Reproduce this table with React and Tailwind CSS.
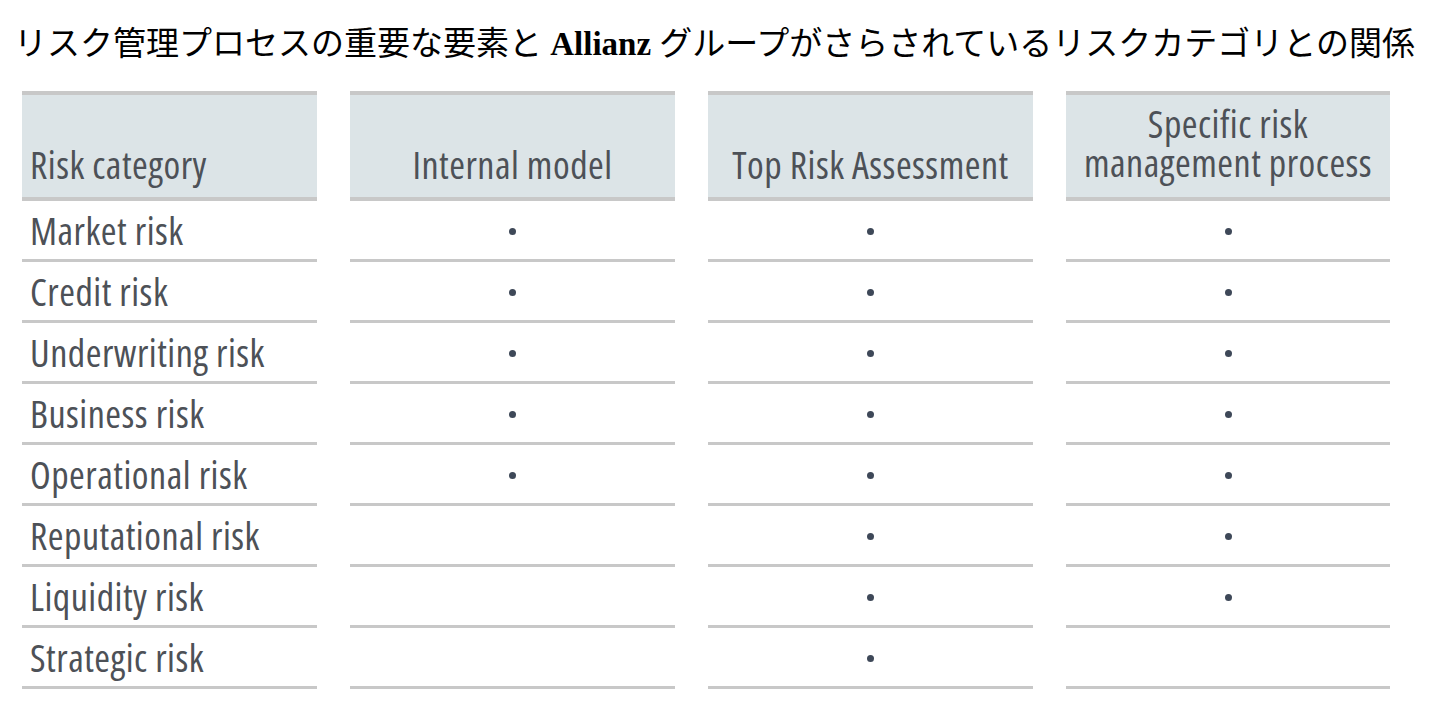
const rows = [
  ["Market risk", true, true, true],
  ["Credit risk", true, true, true],
  ["Underwriting risk", true, true, true],
  ["Business risk", true, true, true],
  ["Operational risk", true, true, true],
  ["Reputational risk", false, true, true],
  ["Liquidity risk", false, true, true],
  ["Strategic risk", false, true, false],
];

function Dot() {
  return <span className="block w-[7px] h-[7px] rounded-full bg-[#3e4858] mt-[2px]" />;
}

export default function App() {
  return (
    <div className="w-[1436px] h-[709px] bg-white overflow-hidden">
      <div className="h-[91px] flex items-center pl-[14px] pb-[3px]">
        <h1 className="text-[33px] leading-none text-black font-normal font-['Liberation_Serif','Noto_Sans_CJK_JP',serif] whitespace-nowrap">
          リスク管理プロセスの重要な要素と <span className="font-bold">Allianz</span> グループがさらされているリスクカテゴリとの関係
        </h1>
      </div>
      <div className="grid grid-cols-[295px_325px_325px_324px] gap-x-[33px] pl-[22px] text-[#4d5157] font-['Open_Sans',sans-serif] font-stretch-[75%] text-[38px] tracking-[0.5px]">
        <div className="h-[110px] bg-[#dce4e7] border-y-4 border-[#c8c8c8] flex items-end pl-[8px] pb-[15px] leading-[36px]">
          Risk category
        </div>
        <div className="h-[110px] bg-[#dce4e7] border-y-4 border-[#c8c8c8] flex items-end justify-center pb-[15px] leading-[36px]">
          Internal model
        </div>
        <div className="h-[110px] bg-[#dce4e7] border-y-4 border-[#c8c8c8] flex items-end justify-center pb-[15px] leading-[36px]">
          Top Risk Assessment
        </div>
        <div className="h-[110px] bg-[#dce4e7] border-y-4 border-[#c8c8c8] flex items-end justify-center pb-[15px] leading-[39px] text-center">
          Specific risk
          <br />
          management process
        </div>
        {rows.map(([label, a, b, c]) => (
          <div key={label} className="contents">
            <div className="h-[61px] border-b-[3px] border-[#c8c8c8] flex items-center pl-[8px] leading-none">
              {label}
            </div>
            <div className="h-[61px] border-b-[3px] border-[#c8c8c8] flex items-center justify-center">
              {a && <Dot />}
            </div>
            <div className="h-[61px] border-b-[3px] border-[#c8c8c8] flex items-center justify-center">
              {b && <Dot />}
            </div>
            <div className="h-[61px] border-b-[3px] border-[#c8c8c8] flex items-center justify-center">
              {c && <Dot />}
            </div>
          </div>
        ))}
      </div>
    </div>
  );
}
